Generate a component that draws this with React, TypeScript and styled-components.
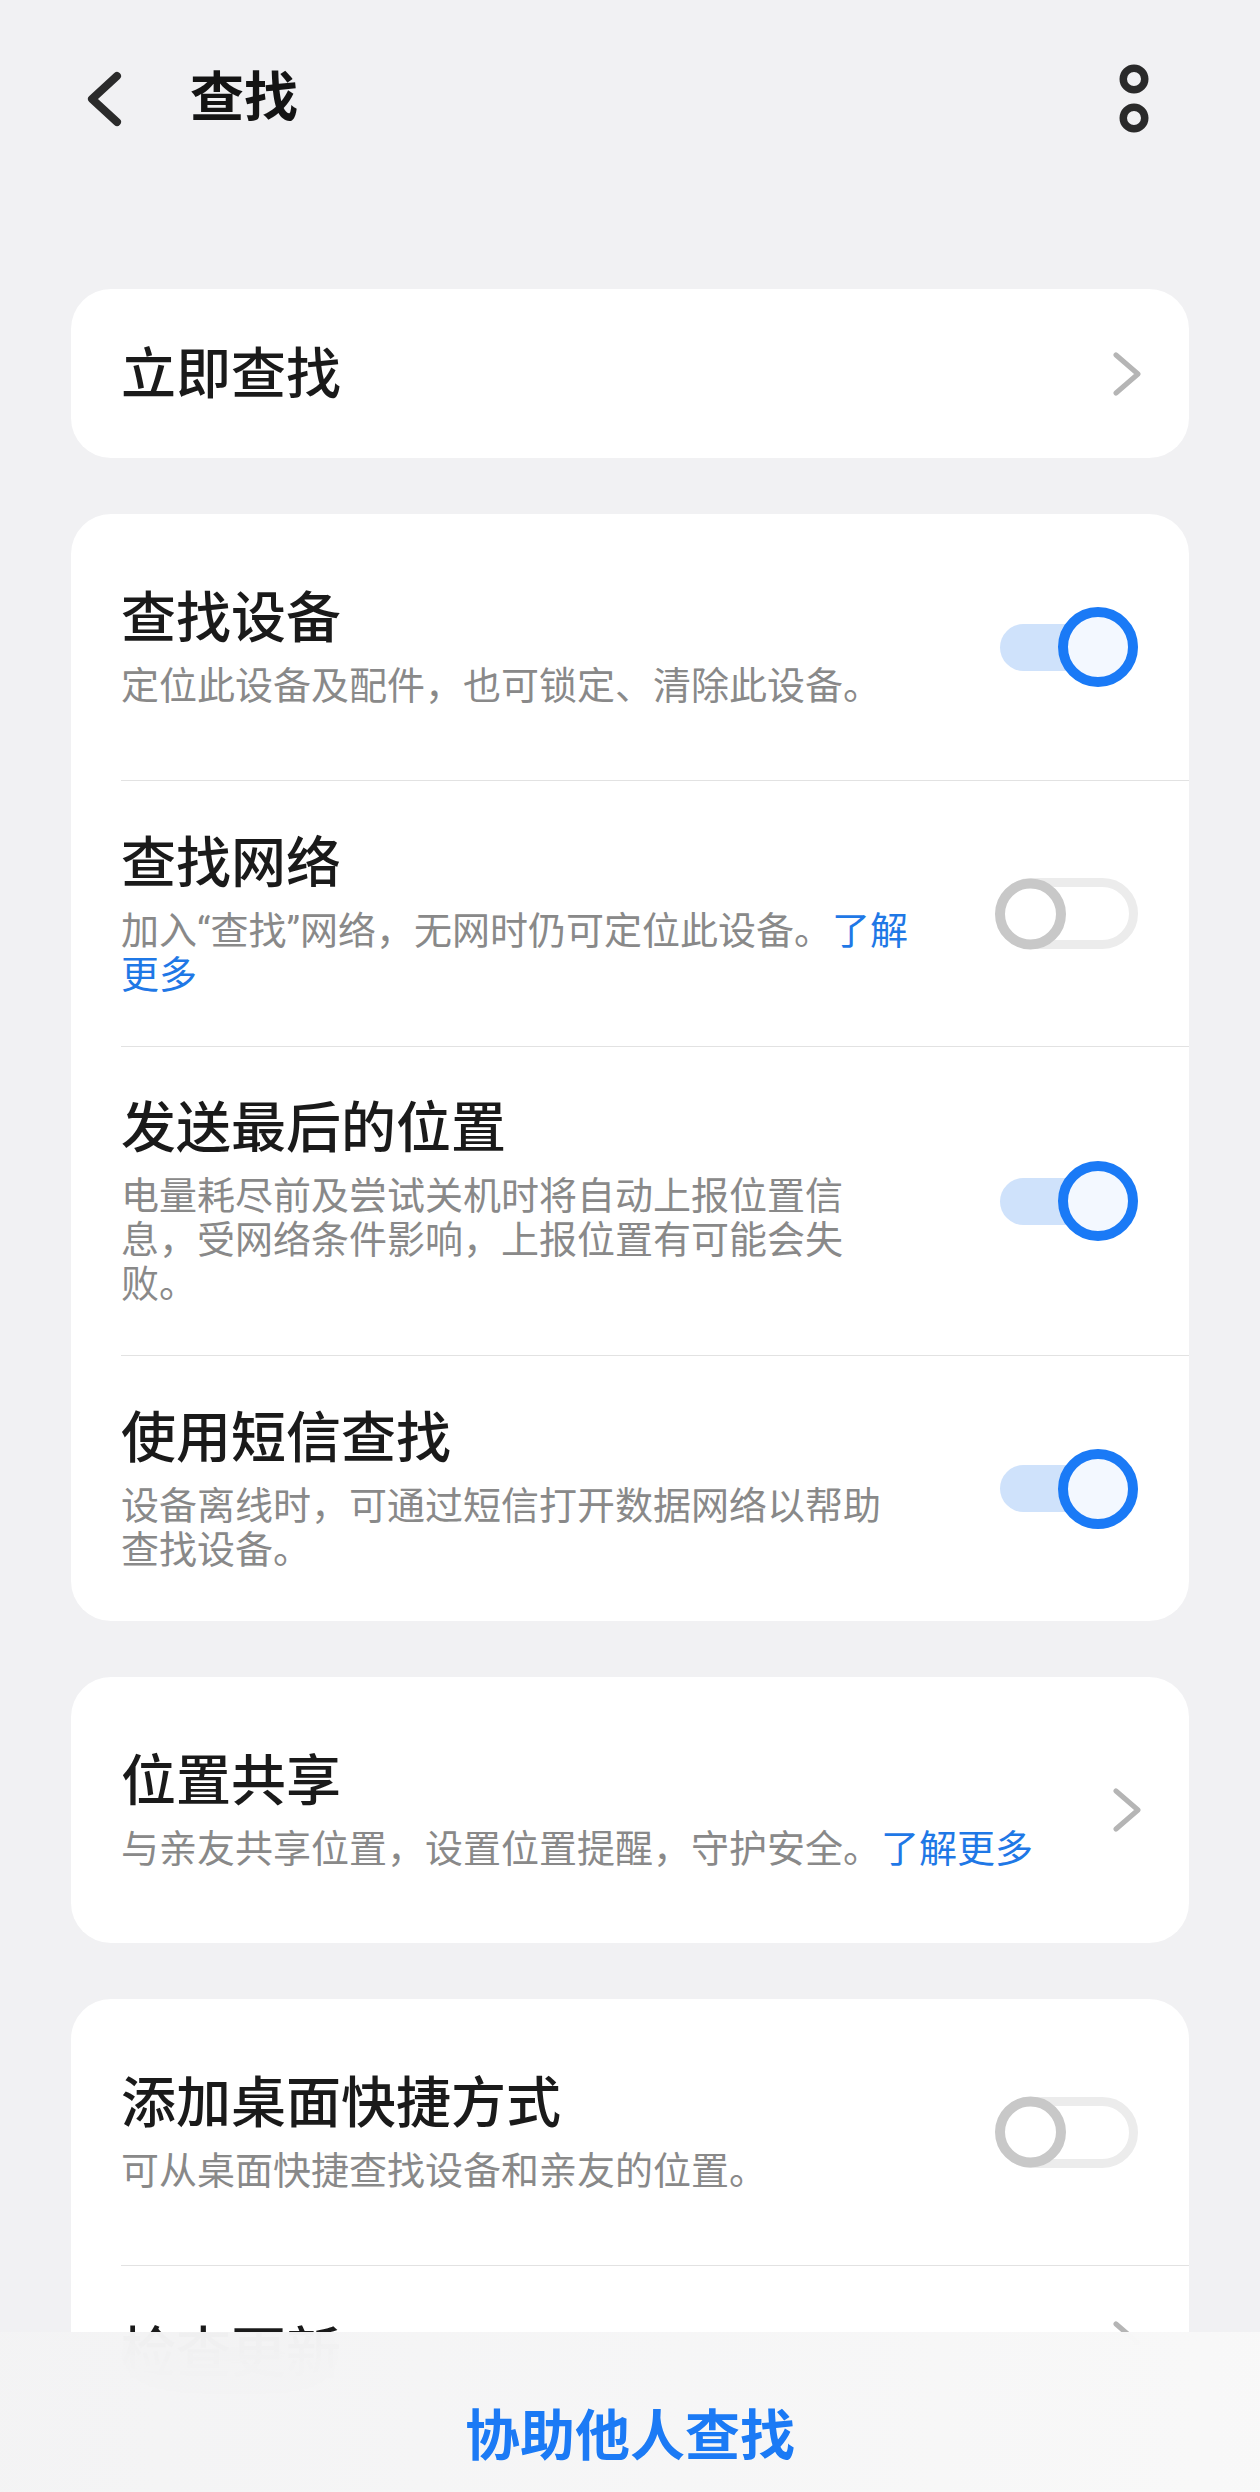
import React from "react";
import styled, { createGlobalStyle } from "styled-components";

const GlobalStyle = createGlobalStyle`
  html, body {
    margin: 0;
    padding: 0;
    background: #f1f1f3;
  }
  body {
    font-family: Roboto, "Noto Sans CJK SC", sans-serif;
    -webkit-font-smoothing: antialiased;
  }
`;

const Page = styled.div`
  position: relative;
  width: 1260px;
  height: 2492px;
  overflow: hidden;
  background: #f1f1f3;
`;

const Header = styled.header`
  display: flex;
  align-items: center;
  height: 198px;
  padding: 0 106px 0 85px;
  box-sizing: border-box;
`;

const IconButton = styled.button`
  display: flex;
  align-items: center;
  justify-content: center;
  padding: 0;
  border: none;
  background: none;
  color: #2a2a2a;
`;

const HeaderTitle = styled.h1`
  margin: 0 0 0 65px;
  font-size: 54px;
  line-height: 64px;
  font-weight: 700;
  color: #141414;
  flex: 1;
`;

const Main = styled.main`
  display: flex;
  flex-direction: column;
  gap: 56px;
  padding: 91px 71px 0;
`;

const Card = styled.section`
  background: #ffffff;
  border-radius: 40px;
  padding-left: 50px;
  overflow: hidden;
`;

const Row = styled.div<{ $min?: number; $first?: boolean; $top?: boolean }>`
  display: flex;
  align-items: ${(p) => (p.$top ? "flex-start" : "center")};
  box-sizing: border-box;
  min-height: ${(p) => p.$min ?? 266}px;
  padding: ${(p) => (p.$top ? "55px" : "49px")} 51px 49px 0;
  border-top: ${(p) => (p.$first ? "none" : "1px solid #e2e2e2")};
`;

const TextCol = styled.div`
  flex: 1;
  min-width: 0;
`;

const Title = styled.div`
  font-size: 55px;
  line-height: 64px;
  font-weight: 500;
  color: #1a1a1a;
`;

const Desc = styled.div`
  margin-top: 14px;
  font-size: 38px;
  line-height: 44px;
  color: #898989;
`;

const Link = styled.span`
  color: #1f78e6;
`;

const ToggleWrap = styled.div`
  position: relative;
  flex: none;
  width: 143px;
  height: 80px;
  margin-left: 80px;
  display: flex;
  align-items: center;
  justify-content: flex-end;
`;

const Track = styled.div<{ $on: boolean }>`
  box-sizing: border-box;
  width: ${(p) => (p.$on ? 138 : 142)}px;
  height: ${(p) => (p.$on ? 47 : 71)}px;
  border-radius: 40px;
  background: ${(p) => (p.$on ? "#cfe2fb" : "#ffffff")};
  border: ${(p) => (p.$on ? "none" : "9px solid #ececec")};
`;

const Thumb = styled.div<{ $on: boolean }>`
  position: absolute;
  top: 50%;
  transform: translateY(-50%);
  box-sizing: border-box;
  border-radius: 50%;
  ${(p) =>
    p.$on
      ? `right: 0; width: 80px; height: 80px; border: 10px solid #1a7af6; background: #f3f8ff;`
      : `left: 0; width: 71px; height: 71px; border: 10px solid #c8c8c8; background: #ffffff;`}
`;

const ChevronSvg = styled.svg`
  flex: none;
  margin-left: 40px;
  margin-right: -3px;
`;

const BottomBar = styled.footer`
  position: absolute;
  left: 0;
  right: 0;
  bottom: 0;
  height: 160px;
  box-sizing: border-box;
  padding-top: 71px;
  text-align: center;
  background: linear-gradient(90deg, rgba(243, 243, 244, 0.97), rgba(248, 248, 248, 0.97));
  backdrop-filter: blur(30px);
`;

const BottomAction = styled.button`
  border: none;
  background: none;
  padding: 0;
  font-family: inherit;
  font-size: 55px;
  line-height: 66px;
  font-weight: 700;
  color: #1b7af5;
`;

function Toggle({ on }: { on: boolean }) {
  return (
    <ToggleWrap>
      <Track $on={on} />
      <Thumb $on={on} />
    </ToggleWrap>
  );
}

function Chevron() {
  return (
    <ChevronSvg width="28" height="44" viewBox="0 0 28 44">
      <polyline
        points="3,3 25,22 3,41"
        fill="none"
        stroke="#b5b5b5"
        strokeWidth="5"
        strokeLinecap="round"
        strokeLinejoin="round"
      />
    </ChevronSvg>
  );
}

export default function App() {
  return (
    <>
      <GlobalStyle />
      <Page>
        <Header>
          <IconButton aria-label="返回">
            <svg width="40" height="64" viewBox="0 0 40 64">
              <polyline
                points="32,9 7,32 32,55"
                fill="none"
                stroke="#2b2b2b"
                strokeWidth="8"
                strokeLinecap="round"
                strokeLinejoin="round"
              />
            </svg>
          </IconButton>
          <HeaderTitle>查找</HeaderTitle>
          <IconButton aria-label="更多">
            <svg width="40" height="80" viewBox="0 0 40 80">
              <circle cx="20" cy="20" r="10.75" fill="none" stroke="#2a2a2a" strokeWidth="7.5" />
              <circle cx="20" cy="59" r="10.75" fill="none" stroke="#2a2a2a" strokeWidth="7.5" />
            </svg>
          </IconButton>
        </Header>

        <Main>
          <Card>
            <Row $first $min={169}>
              <TextCol>
                <Title>立即查找</Title>
              </TextCol>
              <Chevron />
            </Row>
          </Card>

          <Card>
            <Row $first>
              <TextCol>
                <Title>查找设备</Title>
                <Desc>定位此设备及配件，也可锁定、清除此设备。</Desc>
              </TextCol>
              <Toggle on />
            </Row>
            <Row>
              <TextCol>
                <Title>查找网络</Title>
                <Desc>
                  加入“查找”网络，无网时仍可定位此设备。<Link>了解</Link>
                  <Link>更多</Link>
                </Desc>
              </TextCol>
              <Toggle on={false} />
            </Row>
            <Row>
              <TextCol>
                <Title>发送最后的位置</Title>
                <Desc>电量耗尽前及尝试关机时将自动上报位置信息，受网络条件影响，上报位置有可能会失败。</Desc>
              </TextCol>
              <Toggle on />
            </Row>
            <Row>
              <TextCol>
                <Title>使用短信查找</Title>
                <Desc>设备离线时，可通过短信打开数据网络以帮助查找设备。</Desc>
              </TextCol>
              <Toggle on />
            </Row>
          </Card>

          <Card>
            <Row $first>
              <TextCol>
                <Title>位置共享</Title>
                <Desc>
                  与亲友共享位置，设置位置提醒，守护安全。<Link>了解更多</Link>
                </Desc>
              </TextCol>
              <Chevron />
            </Row>
          </Card>

          <Card>
            <Row $first>
              <TextCol>
                <Title>添加桌面快捷方式</Title>
                <Desc>可从桌面快捷查找设备和亲友的位置。</Desc>
              </TextCol>
              <Toggle on={false} />
            </Row>
            <Row $top>
              <TextCol>
                <Title>检查更新</Title>
              </TextCol>
              <Chevron />
            </Row>
          </Card>
        </Main>

        <BottomBar>
          <BottomAction>协助他人查找</BottomAction>
        </BottomBar>
      </Page>
    </>
  );
}
